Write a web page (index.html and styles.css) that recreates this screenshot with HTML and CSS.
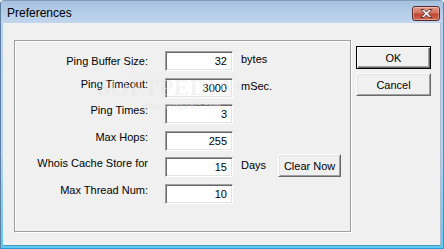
FILE: index.html
```html
<!DOCTYPE html>
<html>
<head>
<meta charset="utf-8">
<link rel="stylesheet" href="styles.css">
</head>
<body>
<div class="window">
  <div class="titlebar">
    <span class="title">Preferences</span>
    <div class="close">
      <svg width="17" height="11" viewBox="0 0 17 11">
        <path d="M3 1.5 L6 1.5 L8.5 4 L11 1.5 L14 1.5 L10.2 5.5 L14 9.5 L11 9.5 L8.5 7 L6 9.5 L3 9.5 L6.8 5.5 Z" fill="#fff" stroke="#4a2a2a" stroke-width="0.9" stroke-linejoin="round"/>
      </svg>
    </div>
  </div>
  <div class="client">
    <div class="group">
      <div class="lbl first">Ping Buffer Size:</div>
      <div class="field">32</div>
      <div class="unit">bytes</div>

      <div class="lbl">Ping Timeout:</div>
      <div class="field">3000</div>
      <div class="unit">mSec.</div>

      <div class="lbl">Ping Times:</div>
      <div class="field">3</div>
      <div class="unit"></div>

      <div class="lbl">Max Hops:</div>
      <div class="field">255</div>
      <div class="unit"></div>

      <div class="lbl">Whois Cache Store for</div>
      <div class="field">15</div>
      <div class="unit extra"><span>Days</span><button class="btn clear">Clear Now</button></div>

      <div class="lbl">Max Thread Num:</div>
      <div class="field">10</div>
      <div class="unit"></div>
    </div>
    <div class="buttons">
      <button class="btn default">OK</button>
      <button class="btn">Cancel</button>
    </div>
  </div>
  <div class="watermark">
    <span class="wm-big">SOFTPEDIA<sup>™</sup></span>
    <span class="wm-small">www.softpedia.com</span>
  </div>
</div>
</body>
</html>
```
FILE: styles.css
```css
html, body {
  margin: 0;
  padding: 0;
  width: 444px;
  height: 249px;
  overflow: hidden;
  background: #fff;
}

.window {
  position: relative;
  box-sizing: border-box;
  width: 444px;
  height: 249px;
  display: flex;
  flex-direction: column;
  border-left: 1px solid #5d7f9f;
  border-right: 1px solid #4f8fb8;
  border-bottom: 1px solid #2a9cd0;
  border-top: 1px solid #7f9db9;
  border-radius: 4px 4px 0 0;
  background: linear-gradient(#a3bedd 0, #b9d0ea 22px, #b7d3ee 60%, #5cc8f2 100%);
  font-family: "Liberation Sans", Arial, sans-serif;
  font-size: 11px;
  color: #000;
}

.titlebar {
  height: 22px;
  display: flex;
  align-items: center;
  justify-content: space-between;
  padding: 0 3px 0 6px;
  background: linear-gradient(#a6c1df, #c1d6ee);
}

.title {
  font-size: 12px;
  color: #000;
  padding-top: 1px;
}

.close {
  box-sizing: border-box;
  width: 28px;
  height: 15px;
  margin-top: 2px;
  border: 1px solid #5a2a2a;
  border-radius: 3px;
  background: linear-gradient(#e49b8c 0, #d2705f 45%, #c0452f 55%, #d26a55 100%);
  box-shadow: inset 0 0 0 1px rgba(255,255,255,0.35);
  display: flex;
  align-items: center;
  justify-content: center;
}

.client {
  flex: 1;
  margin: 0 2px 2px 2px;
  background: #f0f0f0;
  border-right: 1px solid #a9bcd0;
  border-bottom: 1px solid #4a9cc4;
  display: flex;
  align-items: flex-start;
  padding: 17px 0 0 11px;
}

.group {
  box-sizing: border-box;
  width: 337px;
  height: 192px;
  border: 1px solid #a0a0a0;
  box-shadow: inset 1px 1px #fff, 1px 1px #fff;
  display: grid;
  grid-template-columns: 133px 68px auto;
  grid-auto-rows: 20px;
  column-gap: 17px;
  row-gap: 6.6px;
  padding-top: 10px;
  align-content: start;
}

.lbl {
  text-align: right;
  line-height: 13px;
  align-self: start;
  padding-top: 0;
}

.lbl.first {
  align-self: center;
}

.field {
  box-sizing: border-box;
  height: 20px;
  background: #fff;
  border: 1px solid;
  border-color: #a0a0a0 #fff #fff #a0a0a0;
  box-shadow: inset 1px 1px #696969, inset -1px -1px #e3e3e3;
  text-align: right;
  padding-right: 5px;
  line-height: 18px;
}

.unit {
  margin-left: -9px;
  line-height: 16px;
  align-self: start;
}

.unit.extra {
  display: flex;
  align-items: flex-start;
  gap: 12px;
  margin-top: -3px;
}

.unit.extra span {
  padding-top: 3px;
}

.btn {
  box-sizing: border-box;
  font-family: "Liberation Sans", Arial, sans-serif;
  font-size: 11px;
  color: #000;
  background: #f0f0f0;
  border: 1px solid;
  border-color: #fff #696969 #696969 #fff;
  box-shadow: inset 1px 1px #e3e3e3, inset -1px -1px #a0a0a0;
  padding: 0;
  margin: 0;
  height: 23px;
}

.clear {
  width: 63px;
}

.buttons {
  display: flex;
  flex-direction: column;
  gap: 4px;
  margin: 6px 0 0 5px;
}

.buttons .btn {
  width: 75px;
}

.btn.default {
  border-color: #000;
  box-shadow: inset 1px 1px #fff, inset -1px -1px #696969, inset -2px -2px #a0a0a0;
}

.watermark {
  position: absolute;
  left: 96px;
  top: 74px;
  display: flex;
  flex-direction: column;
  align-items: flex-end;
  pointer-events: none;
}

.wm-big {
  font-family: "Liberation Serif", serif;
  font-size: 24px;
  letter-spacing: 1px;
  color: rgba(255,255,255,0.45);
  text-shadow: 0 0 1px rgba(120,120,120,0.18);
  line-height: 24px;
}

.wm-big sup {
  font-size: 7px;
  vertical-align: top;
}

.wm-small {
  font-family: "DejaVu Sans Condensed", "Liberation Sans Narrow", sans-serif;
  font-size: 9px;
  color: rgba(255,255,255,0.5);
  text-shadow: 0 0 1px rgba(120,120,120,0.18);
  margin-top: 2px;
  margin-right: 22px;
}
```
